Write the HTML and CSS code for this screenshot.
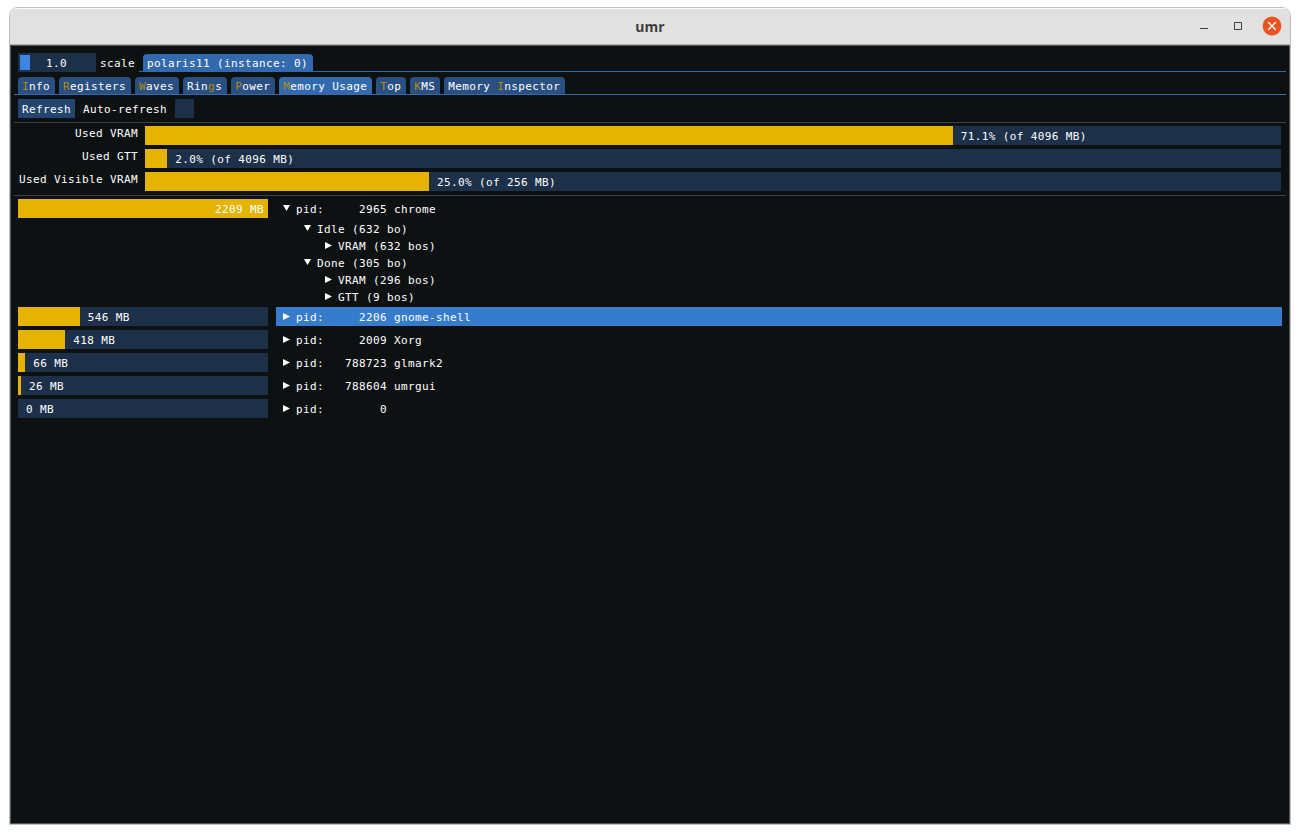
FILE: index.html
```html
<!DOCTYPE html>
<html lang="en">
<head>
    <meta charset="UTF-8">
    <title>umr</title>
    <link rel="stylesheet" href="styles.css">
</head>
<body>
    <div class="window">
        <div class="titlebar">
            <span class="title">umr</span>
            <div class="window-buttons">
                <svg width="10" height="10" viewBox="0 0 10 10"><path d="M1 7.5h8" stroke="#3d3d3d" fill="none"/></svg>
                <svg width="10" height="10" viewBox="0 0 10 10"><path d="M1.5 1.5h7v7h-7z" stroke="#3d3d3d" fill="none"/></svg>
                <svg width="20" height="20" viewBox="0 0 20 20"><circle cx="10" cy="10" r="9.4" fill="#e95420"/><path d="M6.3 6.3l7.4 7.4M13.7 6.3l-7.4 7.4" stroke="#fff" stroke-width="1.5" fill="none"/></svg>
            </div>
        </div>
        <div class="content">
            <div class="top-row">
                <div class="slider"><div class="grab"></div><span>1.0</span></div>
                <span class="slider-label">scale</span>
                <div class="tabs asic-tabs">
                    <div class="tab active">polaris11 (instance: 0)</div>
                </div>
            </div>
            <div class="tabs">
                <div class="tab"><b>I</b>nfo</div>
                <div class="tab"><b>R</b>egisters</div>
                <div class="tab"><b>W</b>aves</div>
                <div class="tab">Rin<b>g</b>s</div>
                <div class="tab"><b>P</b>ower</div>
                <div class="tab active"><b>M</b>emory Usage</div>
                <div class="tab"><b>T</b>op</div>
                <div class="tab"><b>K</b>MS</div>
                <div class="tab">Memory <b>I</b>nspector</div>
            </div>
            <div class="toolbar">
                <div class="button">Refresh</div>
                <span>Auto-refresh</span>
                <div class="checkbox"></div>
            </div>
            <div class="separator"></div>
            <div class="usage">
                <div class="usage-label">Used VRAM</div>
                <div class="bar"><div class="fill" style="width: 71.1%"></div><span>71.1% (of 4096 MB)</span></div>
                <div class="usage-label">Used GTT</div>
                <div class="bar"><div class="fill" style="width: 1.95%"></div><span>2.0% (of 4096 MB)</span></div>
                <div class="usage-label">Used Visible VRAM</div>
                <div class="bar"><div class="fill" style="width: 25%"></div><span>25.0% (of 256 MB)</span></div>
            </div>
            <div class="separator"></div>
            <div class="processes">
                <div class="bar"><div class="fill" style="width: 100%">2209 MB</div></div>
                <div class="tree">
                    <div class="process"><i class="arrow open"></i>pid:     2965 chrome</div>
                    <div class="node"><i class="arrow open"></i>Idle (632 bo)</div>
                    <div class="node leaf"><i class="arrow"></i>VRAM (632 bos)</div>
                    <div class="node"><i class="arrow open"></i>Done (305 bo)</div>
                    <div class="node leaf"><i class="arrow"></i>VRAM (296 bos)</div>
                    <div class="node leaf"><i class="arrow"></i>GTT (9 bos)</div>
                </div>
                <div class="bar"><div class="fill" style="width: 24.7%"></div><span>546 MB</span></div>
                <div class="process hovered"><i class="arrow"></i>pid:     2206 gnome-shell</div>
                <div class="bar"><div class="fill" style="width: 18.9%"></div><span>418 MB</span></div>
                <div class="process"><i class="arrow"></i>pid:     2009 Xorg</div>
                <div class="bar"><div class="fill" style="width: 2.9%"></div><span>66 MB</span></div>
                <div class="process"><i class="arrow"></i>pid:   788723 glmark2</div>
                <div class="bar"><div class="fill" style="width: 1.2%"></div><span>26 MB</span></div>
                <div class="process"><i class="arrow"></i>pid:   788604 umrgui</div>
                <div class="bar"><div class="fill" style="width: 0%"></div><span>0 MB</span></div>
                <div class="process"><i class="arrow"></i>pid:        0</div>
            </div>
        </div>
    </div>
</body>
</html>
```
FILE: styles.css
```css
:root {
    --background: #0d1112;
    --frame: #1d304a;
    --fill: #e6b300;
    --tab: #2a4f82;
    --tab-active: #3369ad;
    --separator: #3e4048;
    --shortcut: #b38b00;
}
* {
    box-sizing: border-box;
}
body {
    margin: 0;
    padding: 7px 9px;
    background: #fff;
}
.window {
    width: 1282px;
    height: 818px;
    border: 1px solid #bfbfbf;
    border-radius: 9px 9px 0 0;
    overflow: hidden;
    display: flex;
    flex-direction: column;
}
.titlebar {
    height: 37px;
    flex: none;
    display: grid;
    grid-template-columns: 1fr auto 1fr;
    align-items: center;
    background: #e1e1e1;
    border-top: 1px solid #fafafa;
    border-bottom: 1px solid #b0b0b0;
}
.title {
    grid-column: 2;
    font: bold 14px "Open Sans", sans-serif;
    color: #3d3d3d;
}
.window-buttons {
    display: flex;
    justify-content: flex-end;
    align-items: center;
    gap: 24px;
    padding: 0 8px 2px 0;
}
.window-buttons svg:last-child {
    margin-left: -5px;
}
.content {
    flex: 1;
    padding: 7px 3px 0;
    background: var(--background);
    border: 1px solid #55555b;
    color: #fff;
    font: 11px/19px "DejaVu Sans Mono", monospace;
    letter-spacing: 0.378px;
}
.top-row {
    display: flex;
    height: 19px;
    padding-left: 4px;
}
.slider {
    display: flex;
    width: 78px;
    padding: 2px;
    background: var(--frame);
    line-height: 17px;
}
.grab {
    width: 10px;
    height: 15px;
    margin-right: 16px;
    background: #3d85e0;
}
.slider-label {
    width: 43px;
    padding-left: 4px;
    line-height: 22px;
}
.tabs {
    display: flex;
    align-items: flex-end;
    gap: 4px;
    height: 18px;
    margin-top: 5px;
    padding-left: 4px;
    border-bottom: 1px solid var(--tab-active);
}
.asic-tabs {
    flex: 1;
    margin-top: 1px;
}
.tab {
    height: 17px;
    padding: 0 5px 0 4px;
    border-radius: 4px 4px 0 0;
    background: var(--tab);
    line-height: 20px;
}
.tab.active {
    background: var(--tab-active);
}
.tab b {
    color: var(--shortcut);
    font-weight: normal;
}
.toolbar {
    display: flex;
    gap: 8px;
    height: 19px;
    margin: 4px 0 4px 4px;
    line-height: 22px;
}
.button {
    width: 57px;
    padding-left: 4px;
    background: #22466f;
}
.checkbox {
    width: 19px;
    background: var(--frame);
}
.separator {
    height: 1px;
    background: var(--separator);
}
.usage {
    display: grid;
    grid-template-columns: 120px 1136px;
    gap: 4px 7px;
    padding: 3px 0 4px 4px;
}
.usage-label {
    text-align: right;
    line-height: 16px;
}
.bar {
    display: flex;
    height: 19px;
    background: var(--frame);
    line-height: 22px;
}
.bar span {
    padding-left: 8px;
}
.fill {
    flex: none;
    padding-right: 4px;
    background: var(--fill);
    text-align: right;
}
.fill:not(:last-child) {
    padding: 0;
}
.processes {
    display: grid;
    grid-template-columns: 250px 1006px;
    gap: 4px 8px;
    padding: 3px 0 0 4px;
}
.process {
    display: flex;
    height: 19px;
    padding-left: 7px;
    line-height: 22px;
    white-space: pre;
}
.process.hovered {
    background: #377bcc;
}
.tree {
    height: 104px;
}
.node {
    display: flex;
    height: 17px;
    padding-left: 28px;
    line-height: 16px;
}
.tree .process {
    margin-bottom: 4px;
}
.leaf {
    padding-left: 49px;
}
.arrow {
    width: 7px;
    height: 7px;
    margin: 6px 6px 0 0;
    background: #fff;
    clip-path: polygon(0 0, 100% 50%, 0 100%);
}
.arrow.open {
    height: 6px;
    clip-path: polygon(0 0, 100% 0, 50% 100%);
}
.node .arrow {
    margin-top: 3px;
}
```
